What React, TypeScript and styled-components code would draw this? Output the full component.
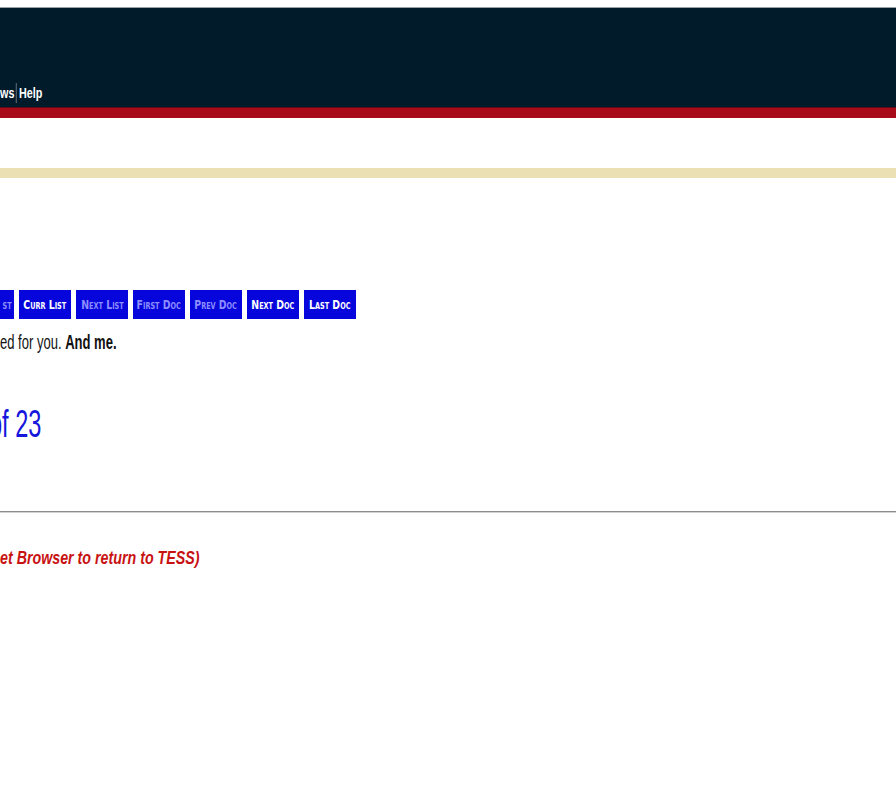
import React from "react";
import styled, { createGlobalStyle } from "styled-components";

const GlobalStyle = createGlobalStyle`
  html, body { margin: 0; padding: 0; background: #ffffff; }
  body { font-family: "Liberation Sans", Arial, sans-serif; }
  #root { width: 896px; overflow: hidden; }
`;

/* Text in the reference is drawn horizontally compressed; this squeezes a run of text. */
const Squeeze = styled.span<{ $x: number }>`
  display: inline-block;
  white-space: nowrap;
  transform: scaleX(${(p) => p.$x});
  transform-origin: 0 50%;
`;

const Page = styled.div`
  padding-top: 7px;
`;

const Header = styled.header`
  height: 100px;
  border-top: 1px solid #9aa3a8;
  background: #021b2b;
  display: flex;
  flex-direction: column;
  justify-content: flex-end;
  padding-bottom: 4px;
  box-sizing: border-box;
`;

const Nav = styled.nav`
  height: 20px;
  display: flex;
`;

const NavItems = styled(Squeeze)`
  display: inline-flex;
  align-items: stretch;
  height: 20px;
`;

const NavLink = styled.a`
  color: #ffffff;
  font-weight: bold;
  font-size: 15px;
  line-height: 20px;
  text-decoration: none;
`;

const NavSep = styled.span`
  width: 1.4px;
  margin: 0 3px 0 2px;
  background: #8a8f96;
`;

const RedBar = styled.div`
  height: 10px;
  background: #a80b1a;
  border-top: 1px solid #5c0a16;
`;

const BeigeBar = styled.div`
  height: 10px;
  margin-top: 50px;
  background: #ebe0b4;
`;

const Content = styled.main`
  padding-top: 112px;
`;

const ButtonRow = styled.div`
  display: flex;
  gap: 5px;
`;

const NavButton = styled.a<{ $disabled?: boolean; $w?: number }>`
  width: ${(p) => p.$w ?? 52}px;
  height: 29px;
  flex: none;
  display: flex;
  align-items: center;
  justify-content: ${(p) => (p.$w ? "flex-end" : "center")};
  padding-right: ${(p) => (p.$w ? 2 : 0)}px;
  box-sizing: border-box;
  overflow: hidden;
  background: #0606dc;
  color: ${(p) => (p.$disabled ? "#8e8eff" : "#ffffff")};
  font-family: "DejaVu Sans", Verdana, sans-serif;
  font-weight: bold;
  font-variant: small-caps;
  font-size: 13px;
  text-decoration: none;
`;

const ButtonText = styled(Squeeze)`
  transform-origin: 50% 50%;
`;

const PartialText = styled(Squeeze)`
  transform-origin: 100% 50%;
`;

const Notice = styled.p`
  margin: 10.7px 0 0 0;
  font-size: 21px;
  line-height: 24px;
  color: #111111;
`;

const Strong = styled.b`
  font-weight: bold;
`;

const RecordCount = styled.div`
  margin: 48px 0 0 -11px;
  font-size: 38px;
  line-height: 44px;
  color: #1616dc;
`;

const Rule = styled.hr`
  margin: 65px 0 0 0;
  height: 0;
  border: none;
  border-top: 1px solid #8c8c8c;
  border-bottom: 1px solid #d2d2d2;
`;

const BackNote = styled.p`
  margin: 34.4px 0 0 0;
  font-size: 19px;
  line-height: 22px;
  font-weight: bold;
  font-style: italic;
  color: #c81212;
`;

const buttons: { label: string; disabled?: boolean }[] = [
  { label: "Curr List" },
  { label: "Next List", disabled: true },
  { label: "First Doc", disabled: true },
  { label: "Prev Doc", disabled: true },
  { label: "Next Doc" },
  { label: "Last Doc" },
];

export default function App() {
  return (
    <>
      <GlobalStyle />
      <Page>
        <Header>
          <Nav>
            <NavItems $x={0.72}>
              <NavLink href="#">ws</NavLink>
              <NavSep />
              <NavLink href="#">Help</NavLink>
            </NavItems>
          </Nav>
        </Header>
        <RedBar />
        <BeigeBar />
        <Content>
          <ButtonRow>
            <NavButton href="#" $disabled $w={14}>
              <PartialText $x={0.72}>st</PartialText>
            </NavButton>
            {buttons.map((b) => (
              <NavButton key={b.label} href="#" $disabled={b.disabled}>
                <ButtonText $x={0.72}>{b.label}</ButtonText>
              </NavButton>
            ))}
          </ButtonRow>
          <Notice>
            <Squeeze $x={0.62}>
              ed for you. <Strong>And me.</Strong>
            </Squeeze>
          </Notice>
          <RecordCount>
            <Squeeze $x={0.62}>of 23</Squeeze>
          </RecordCount>
          <Rule />
          <BackNote>
            <Squeeze $x={0.75}>et Browser to return to TESS)</Squeeze>
          </BackNote>
        </Content>
      </Page>
    </>
  );
}
